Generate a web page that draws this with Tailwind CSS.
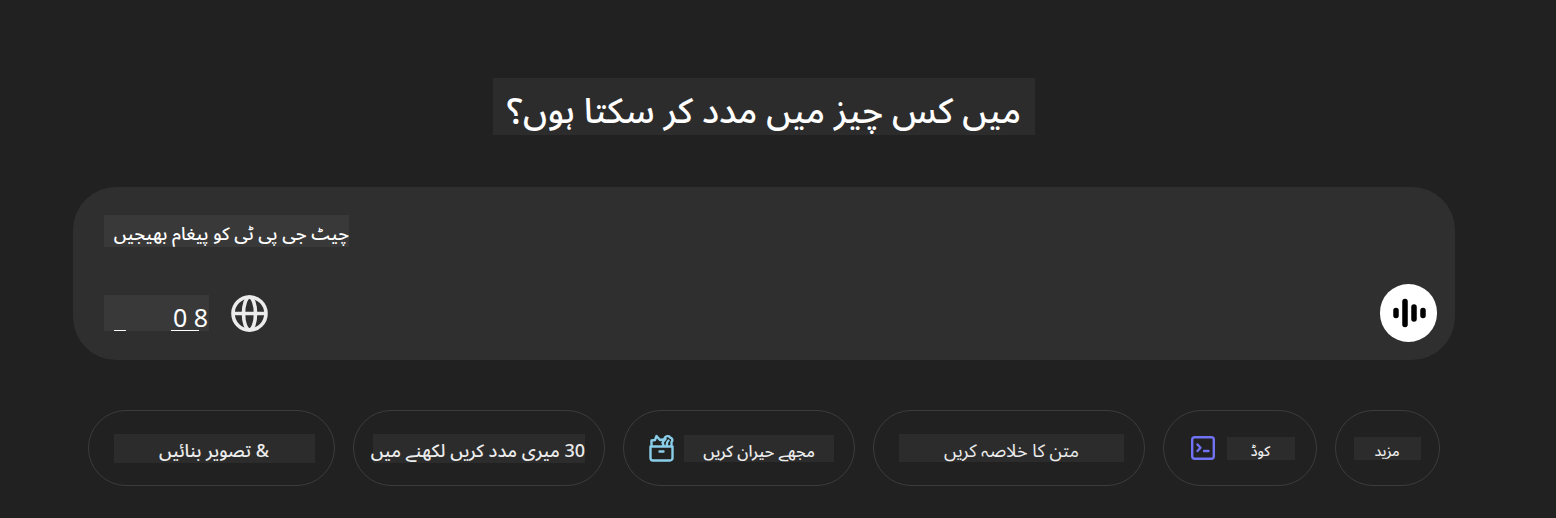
<!DOCTYPE html>
<html lang="ur">
<head>
<meta charset="utf-8">
<meta name="viewport" content="width=device-width, initial-scale=1">
<title>ChatGPT</title>
<script src="https://cdn.jsdelivr.net/npm/@tailwindcss/browser@4"></script>
</head>
<body class="bg-[#212121] min-h-screen text-[#ececec] font-['Noto_Sans','Noto_Sans_Arabic','DejaVu_Sans',sans-serif]">
<main class="pt-[78px] pb-8 pl-[73px] pr-[101px]">
  <h1 dir="rtl" class="mx-auto w-fit bg-[#2c2c2c] text-white px-[14px] pt-2 h-[57px] text-[35px] leading-[48px] font-medium whitespace-nowrap">میں کس چیز میں مدد کر سکتا ہوں؟</h1>

  <form class="mt-13 bg-[#2f2f2f] rounded-[43px] h-[173px] pt-7 pb-[18px] pl-[31px] pr-[18px] flex flex-col justify-between">
    <input dir="rtl" type="text" aria-label="پیغام" placeholder="چیٹ جی پی ٹی کو پیغام بھیجیں" class="block w-[245px] h-8 pt-1 bg-[#393939] text-lg leading-7 font-medium text-white placeholder:text-white outline-none">
    <div class="flex items-center justify-between">
      <div class="flex items-center gap-[22px]">
        <button type="button" class="relative w-[105px] h-9 bg-[#393939] text-white text-[25px] leading-7 text-right pt-2 pr-px">0 8
          <span class="absolute left-[10px] bottom-0 w-3 h-px rounded-full bg-white"></span>
          <span class="absolute right-[10px] bottom-0 w-7 h-px bg-white"></span>
        </button>
        <button type="button" aria-label="Web">
          <svg class="size-[37px] block" viewBox="0 0 37 37" fill="none" stroke="#ececec" stroke-width="3.6"><circle cx="18.500" cy="18.500" r="16.500"/><ellipse cx="18.500" cy="18.500" rx="6" ry="16.500"/><path d="M2 18.500h33"/></svg>
        </button>
      </div>
      <button type="button" aria-label="Voice" class="w-[57px] h-[58px] rounded-full bg-white flex items-center justify-center">
        <svg class="w-[34px] h-[30px]" viewBox="0 0 34 30" fill="none" stroke="#000" stroke-width="5.500" stroke-linecap="round"><path d="M4 12.500v5M13 3.500v23M22 9v12M31 12.500v5"/></svg>
      </button>
    </div>
  </form>

  <nav class="mt-[50px] px-[15px] flex gap-[18px] whitespace-nowrap">
    <button class="h-[76px] basis-[247px] border border-[#3c3c3c] rounded-full flex items-center justify-center pl-[5px]"><span dir="rtl" class="bg-[#2c2c2c] w-[201px] h-[29px] pt-1 text-lg leading-6 font-medium">&amp; تصویر بنائیں</span></button>
    <button class="h-[76px] basis-[252px] border border-[#3c3c3c] rounded-full flex items-center justify-center"><span dir="rtl" class="bg-[#2c2c2c] w-[212px] h-[29px] pt-1 text-lg leading-6 font-medium">30 میری مدد کریں لکھنے میں</span></button>
    <button class="h-[76px] basis-[232px] border border-[#3c3c3c] rounded-full flex items-center justify-center gap-[10px] pl-[5px]">
      <svg class="w-[25px] h-7" viewBox="0 0 25 28" fill="none" stroke="#8acee9" stroke-width="2.400" stroke-linejoin="round" stroke-linecap="round"><path d="M1.500 12.500h22v11.500a2.500 2.500 0 0 1-2.500 2.500H4a2.500 2.500 0 0 1-2.500-2.500zM10.500 17.500h4M2.500 12V6.500L6 6l1.500-4 3.500 4 5.500-1-3 3.500 1 3M15.500 5c.5-3.500 5-3.500 5.500-1.500 2.500.5 3 3 1.500 4.500v4M19.500 6.500c-1.500 1.500-2 3-1.500 5"/></svg>
      <span dir="rtl" class="bg-[#2c2c2c] w-[150px] h-[27px] pt-1 text-base leading-6 font-medium">مجھے حیران کریں</span></button>
    <button class="h-[76px] basis-[272px] border border-[#3c3c3c] rounded-full flex items-center justify-center pl-[5px]"><span dir="rtl" class="bg-[#2c2c2c] w-[225px] h-[28px] pt-1 text-lg leading-6">متن کا خلاصہ کریں</span></button>
    <button class="h-[76px] basis-[154px] border border-[#3c3c3c] rounded-full flex items-center justify-center gap-3 pl-[5px]">
      <svg class="size-6" viewBox="0 0 24 24" fill="none" stroke="#7172f4" stroke-width="2.400" stroke-linecap="round" stroke-linejoin="round"><rect x="1.200" y="1.200" width="21.600" height="21.600" rx="2.500"/><path d="M6.500 8.500l3 3.300-3 3.200M13 15h4.500"/></svg>
      <span dir="rtl" class="bg-[#2c2c2c] w-[68px] h-[23px] pt-1 text-sm leading-5 font-medium">کوڈ</span></button>
    <button class="h-[76px] basis-[105px] border border-[#3c3c3c] rounded-full flex items-center justify-center pr-px"><span dir="rtl" class="bg-[#2c2c2c] w-[67px] h-[23px] pt-1 text-sm leading-5 font-medium">مزید</span></button>
  </nav>
</main>
</body>
</html>
